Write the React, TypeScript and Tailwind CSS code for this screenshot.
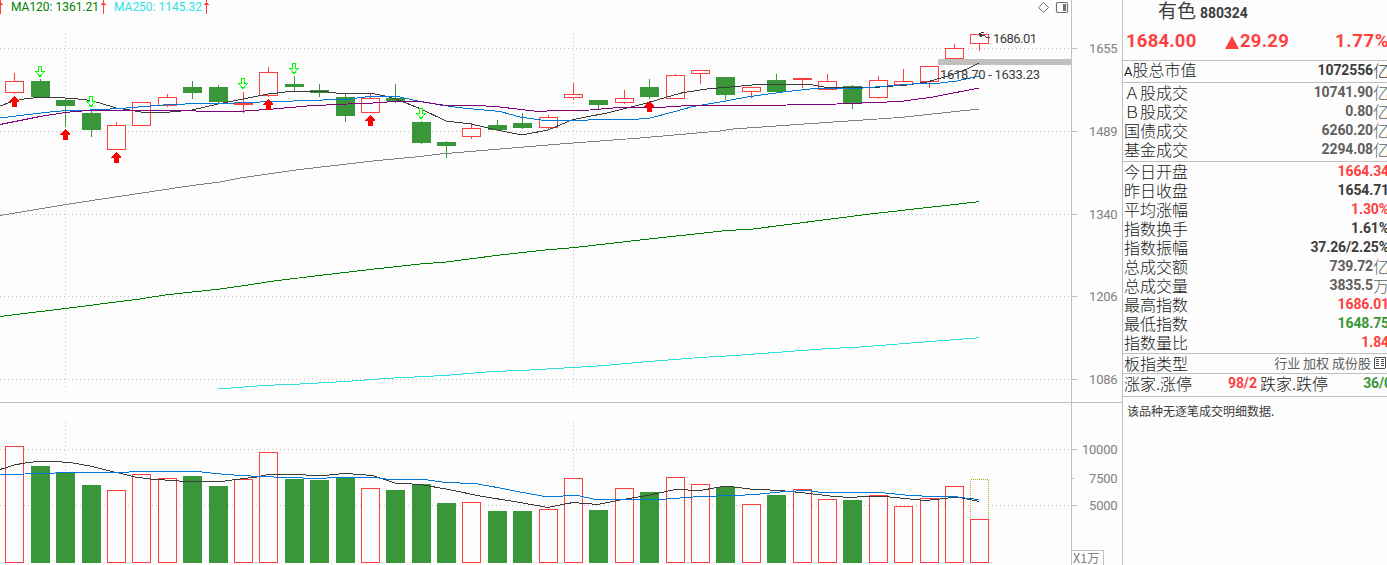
import React from "react";

const RED = "#ff4040";
const GREEN = "#399639";
const BG = "#fdfdfd";
const GRID = "#c0c0c0";

type Bar = {
  x: number;
  up: boolean;
  top: number;
  bottom: number;
  high: number;
  low: number;
  vol: number;
};

const raw: [number, number, number, number, number, number, number][] = [
  [5, 1, 81, 93, 73, 94, 446],
  [31, 0, 81, 97, 79, 97, 466],
  [56, 0, 100, 106, 98, 127, 473],
  [82, 0, 113, 130, 109, 137, 485],
  [107, 1, 125, 150, 122, 150, 490],
  [132, 1, 102, 126, 102, 126, 474],
  [158, 1, 97, 106, 94, 107, 478],
  [183, 0, 87, 93, 81, 99, 476],
  [209, 0, 87, 102, 85, 104, 486],
  [234, 1, 102, 105, 92, 113, 479],
  [259, 1, 72, 96, 67, 97, 452],
  [285, 0, 84, 87, 76, 91, 479],
  [310, 0, 90, 93, 84, 97, 480],
  [336, 0, 97, 116, 94, 122, 477],
  [361, 1, 98, 113, 93, 113, 488],
  [386, 0, 98, 101, 84, 103, 490],
  [412, 0, 122, 143, 121, 144, 484],
  [437, 0, 142, 146, 141, 158, 503],
  [462, 1, 128, 137, 123, 139, 502],
  [488, 0, 125, 130, 120, 130, 511],
  [513, 0, 123, 128, 113, 129, 511],
  [539, 1, 117, 128, 115, 130, 509],
  [564, 1, 94, 98, 83, 100, 478],
  [589, 0, 100, 105, 100, 109, 510],
  [615, 1, 98, 103, 90, 104, 488],
  [640, 0, 87, 97, 79, 99, 492],
  [666, 1, 75, 99, 74, 99, 477],
  [691, 1, 70, 74, 70, 84, 484],
  [716, 0, 77, 95, 77, 100, 487],
  [742, 1, 87, 92, 87, 98, 504],
  [767, 0, 80, 92, 74, 93, 495],
  [793, 1, 78, 80, 78, 88, 489],
  [818, 1, 81, 90, 74, 90, 499],
  [843, 0, 86, 103, 85, 109, 500],
  [869, 1, 80, 98, 76, 99, 495],
  [894, 1, 81, 85, 69, 85, 506],
  [920, 1, 66, 82, 66, 88, 498],
  [945, 1, 48, 59, 44, 59, 486],
  [970, 1, 34, 44, 34, 51, 519],
];

const bars: Bar[] = raw.map(([x, up, top, bottom, high, low, vol]) => ({
  x,
  up: up === 1,
  top,
  bottom,
  high,
  low,
  vol,
}));

const priceLines: [string, string][] = [
  ["#808080", "0,215.5 65,204.7 92,200.5 192,185.5 220,182 240,178 293,170.5 300,169.5 373,161 420,156.5 440,154 500,149 560,144 640,138 720,131 733,129 833,122 900,117.5 979,109"],
  ["#008000", "0,316.5 65,308.5 140,299 165,295 220,289 245,285.5 270,281.5 319,275.5 370,269.5 420,264 446,262 500,255 545,250 573,247.7 640,240 725,230.7 753,229 870,214 979,201.7"],
  ["#2ee0e0", "218,389 265,385.4 300,384 345,381.5 390,378.2 446,375.4 490,371.7 530,370 573,367.5 605,365.5 649,361.5 700,357.5 735,355.5 825,348.8 860,347 905,343.5 979,337.8"],
  ["#3c3c3c", "0,106 14,101 27,98.5 44,97 65,98 85,99.5 100,103 116,108 130,110 141,112 170,112 192,110 218,104 243,99 268,94 294,91 319,91 345,94 370,93 385,96 396,99 421,109 446,121 471,124 497,130 522,135 548,130 573,119.5 607,113 627,108 647,103 667,97 683,92.6 707,89 730,87 747,85.5 763,84 807,84 827,87.5 863,88 880,87 907,85 927,82 953,74.5 967,69 979,63"],
  ["#0078d7", "0,118 45,112.5 68,110.4 90,110 120,108.5 150,106 170,104.5 215,103 235,103 260,102 310,100.5 350,99 370,96.3 397,96.3 413,100 440,105 467,108.5 500,111.5 520,117 543,120.3 583,120.3 597,119.4 637,119.2 650,118 673,112 693,106.5 723,101.5 750,96.5 783,92 810,89 860,88.3 887,86 913,84 940,83 957,81 979,76"],
  ["#800080", "0,124.5 40,116.5 65,112.5 85,110.7 100,110.4 190,110.4 200,111.4 240,111.4 273,109 307,106 340,104.3 373,103 397,101.3 423,102 443,105 480,105.6 500,107 537,111.4 560,110.5 590,110 620,107.4 660,107.4 687,105.6 767,105.4 837,104 900,101.5 933,97 979,88"],
];

const volumeLines: [string, string][] = [
  ["#3c3c3c", "0,469.5 14,465 28,462.5 40,461.4 53,461.4 70,462.5 90,466 110,471 125,474.5 135,477 150,479 165,480 185,481.4 222,481.4 240,479 257,477 268,474.5 300,474.5 310,475.4 325,475.4 345,473.4 360,474.5 372,475.5 383,479 395,483 420,484.5 446,489 480,496 520,502.5 548,507.5 573,502.5 598,504.5 620,500 650,495 675,489.5 700,490.5 720,487 730,486.5 750,489 780,490.5 805,493 830,496 850,497.5 870,496 885,496.5 900,498 925,500.5 940,499 957,497 967,499 979,501.5"],
  ["#0078d7", "0,474.5 50,473.5 60,472.5 128,472.4 130,471.4 197,471.4 215,473.5 240,475.5 262,476.5 285,477.5 320,478.5 335,477.5 375,477.5 390,479.5 425,479.5 445,482.5 475,483.5 500,488 520,492 545,496.5 558,496.5 568,495.5 578,495.5 595,499.5 660,499.5 680,498 700,496.5 735,495.5 755,494.5 785,491.5 808,490.5 825,493 840,492.5 880,492.5 905,495 930,496.5 955,496.5 965,498 979,499.5"],
];

const buyMarks: [number, number][] = [[14, 96], [65, 129], [116, 152], [268, 99], [370, 115], [649, 101]];
const sellMarks: [number, number][] = [[40, 66], [91, 96], [243, 78], [294, 63], [421, 108]];

function Dots({ x1, y1, x2, y2 }: { x1: number; y1: number; x2: number; y2: number }) {
  return <line x1={x1} y1={y1} x2={x2} y2={y2} stroke={GRID} strokeDasharray="1 3" />;
}

function Lines({ data }: { data: [string, string][] }) {
  return (
    <>
      {data.map(([stroke, points]) => (
        <polyline key={stroke} points={points} fill="none" stroke={stroke} />
      ))}
    </>
  );
}

function TopMark({ x }: { x: number }) {
  return <path d={`M${x} 0h1v3h1v1h1v1h-2v9h-1v-9h-2v-1h1v-1h1z`} fill={RED} />;
}

function PriceChart() {
  return (
    <svg width="1071" height="402" viewBox="0 0 1071 402" shapeRendering="crispEdges" className="block shrink-0 font-['Roboto',sans-serif]">
      {[48.5, 131.5, 214.5, 296.5, 379.5].map((y) => (
        <Dots key={y} x1={0} y1={y} x2={1071} y2={y} />
      ))}
      {[65.5, 573.5].map((x) => (
        <Dots key={x} x1={x} y1={34} x2={x} y2={388} />
      ))}
      <TopMark x={0} />
      <TopMark x={103} />
      <TopMark x={206} />
      <text x="11" y="11" fontSize="12" fill="#008000" textLength="88">MA120: 1361.21</text>
      <text x="114" y="11" fontSize="12" fill="#2ee0e0" textLength="88">MA250: 1145.32</text>
      <g shapeRendering="geometricPrecision" fill="none" stroke="#707070">
        <path d="M1043.5 2.5l5 5-5 5-5-5z" />
        <rect x="1056.5" y="2.5" width="11" height="10" rx="1.5" strokeWidth="1.2" />
        <rect x="1063" y="4" width="3" height="7" fill="#707070" stroke="none" />
      </g>
      <rect x="938" y="59" width="133" height="6" fill={GRID} />
      {bars.map((b) => (
        <g key={b.x}>
          <rect x={b.x + 9} y={b.high} width="1" height={b.low - b.high} fill={b.up ? RED : GREEN} />
          {b.up && b.bottom - b.top > 3 ? (
            <rect x={b.x + 0.5} y={b.top + 0.5} width="18" height={b.bottom - b.top - 1} fill={BG} stroke={RED} />
          ) : (
            <rect x={b.x} y={b.top} width="19" height={b.bottom - b.top} fill={b.up ? RED : GREEN} />
          )}
        </g>
      ))}
      <Lines data={priceLines} />
      {buyMarks.map(([x, y]) => (
        <path key={x} d={`M${x} ${y}l5 5v1h-2v5h-5v-5h-3v-1z`} fill="#ff0000" />
      ))}
      {sellMarks.map(([x, y]) => (
        <path key={x} d={`M${x - 1.5} ${y + 0.5}h3v5h3l-4.5 5-4.5-5h3z`} fill={BG} stroke="#00ff00" />
      ))}
      <path d="M990 37.5h-3l-3-2-5-1M979.5 34l2-1.5h2M979.5 35l2 2" fill="none" stroke="#3c3c3c" />
      <text x="993" y="43" fontSize="13" fill="#3c3c3c" textLength="44">1686.01</text>
      <text x="940" y="79" fontSize="13" fill="#3c3c3c" textLength="100">1618.70 - 1633.23</text>
    </svg>
  );
}

function VolumeChart() {
  return (
    <svg width="1071" height="162" viewBox="0 403 1071 162" shapeRendering="crispEdges" className="block shrink-0">
      <Dots x1={0} y1={449.5} x2={1071} y2={449.5} />
      <Dots x1={0} y1={505.5} x2={1071} y2={505.5} />
      {[65.5, 573.5].map((x) => (
        <Dots key={x} x1={x} y1={422} x2={x} y2={563} />
      ))}
      <rect x="970.5" y="479.5" width="18" height="50" fill={BG} stroke="#b4a814" strokeDasharray="1 1" />
      {bars.map((b) =>
        b.up ? (
          <rect key={b.x} x={b.x + 0.5} y={b.vol + 0.5} width="18" height={562 - b.vol} fill={BG} stroke={RED} />
        ) : (
          <rect key={b.x} x={b.x} y={b.vol} width="19" height={563 - b.vol} fill={GREEN} />
        ),
      )}
      <Lines data={volumeLines} />
    </svg>
  );
}

function Axis({ top, height, ticks }: { top: number; height: number; ticks: [string, number, number][] }) {
  return (
    <svg width="50" height={height} viewBox={`0 ${top} 50 ${height}`} className="block font-['Roboto',sans-serif]">
      {ticks.map(([label, y, len]) => (
        <g key={label}>
          <rect x="0" y={y} width={len} height="1" fill={GRID} />
          <text x="45.5" y={y + 5} fontSize="13" fill="#808080" textAnchor="end" textLength={label.length * 7.1}>
            {label}
          </text>
        </g>
      ))}
    </svg>
  );
}

type RowData = { label: React.ReactNode; value: string; unit?: string; tone: string };

const market: RowData[] = [
  { label: "Ａ股成交", value: "10741.90", unit: "亿", tone: "text-[#606060]" },
  { label: "Ｂ股成交", value: "0.80", unit: "亿", tone: "text-[#606060]" },
  { label: "国债成交", value: "6260.20", unit: "亿", tone: "text-[#606060]" },
  { label: "基金成交", value: "2294.08", unit: "亿", tone: "text-[#606060]" },
];

const detail: RowData[] = [
  { label: "今日开盘", value: "1664.34", tone: "text-[#ff4040]" },
  { label: "昨日收盘", value: "1654.71", tone: "text-[#3c3c3c]" },
  { label: "平均涨幅", value: "1.30%", tone: "text-[#ff4040]" },
  { label: "指数换手", value: "1.61%", tone: "text-[#3c3c3c]" },
  { label: "指数振幅", value: "37.26/2.25%", tone: "text-[#3c3c3c]" },
  { label: "总成交额", value: "739.72", unit: "亿", tone: "text-[#606060]" },
  { label: "总成交量", value: "3835.5", unit: "万", tone: "text-[#606060]" },
  { label: "最高指数", value: "1686.01", tone: "text-[#ff4040]" },
  { label: "最低指数", value: "1648.75", tone: "text-[#399639]" },
  { label: "指数量比", value: "1.84", tone: "text-[#ff4040]" },
];

function Row({ row }: { row: RowData }) {
  return (
    <div className="-mr-[2px] flex h-[19px] items-center justify-between pl-px leading-[19px]">
      <span className="text-[16px] font-light text-[#181818]">{row.label}</span>
      <span className={"flex items-center " + row.tone}>
        <span className="font-['Roboto',sans-serif] text-[14px] font-bold tracking-[-0.12px]">{row.value}</span>
        {row.unit && <span className="text-[16px] font-light">{row.unit}</span>}
      </span>
    </div>
  );
}

function QuotePanel() {
  return (
    <aside className="flex h-full w-[265px] shrink-0 flex-col overflow-hidden border-l border-[#c0c0c0] whitespace-nowrap text-[#3c3c3c]">
      <div className="flex h-[60px] shrink-0 flex-col">
        <div className="flex h-[24px] items-baseline gap-[4px] pl-[35px] leading-[20px]">
          <span className="text-[19px]">有色</span>
          <span className="font-['Roboto',sans-serif] text-[14px] font-bold tracking-[-0.1px]">880324</span>
        </div>
        <div className="-mr-[2px] flex h-[36px] items-center pl-[3px] font-['Roboto',sans-serif] text-[18.5px] font-bold text-[#ff4040]">
          <span className="w-[99px] tracking-[0.2px]">1684.00</span>
          <span className="flex items-center gap-[1px] tracking-[0.25px]">
            <svg width="14" height="13" viewBox="0 0 14 13">
              <path d="M7 0l7 13H0z" fill={RED} />
            </svg>
            29.29
          </span>
          <span className="ml-auto tracking-[0.6px]">1.77%</span>
        </div>
      </div>
      <div className="h-[22px] shrink-0 border-t border-[#c0c0c0]">
        <Row row={{ label: <><b className="font-['Roboto',sans-serif] text-[13px]">A</b>股总市值</>, value: "1072556", unit: "亿", tone: "text-[#3c3c3c]" }} />
      </div>
      <div className="h-[79px] shrink-0 border-t border-[#c0c0c0]">
        {market.map((r) => <Row key={r.value} row={r} />)}
      </div>
      <div className="h-[192px] shrink-0 border-t border-[#c0c0c0]">
        {detail.map((r) => <Row key={r.value} row={r} />)}
      </div>
      <div className="flex h-[20px] shrink-0 items-center border-t border-[#c0c0c0] pb-[2px] pl-px">
        <span className="text-[16px] leading-[18px] font-light text-[#181818]">板指类型</span>
        <span className="ml-auto text-[13px] leading-[18px] text-[#606060]">行业 加权 成份股</span>
        <svg width="12" height="12" viewBox="0 0 12 12" shapeRendering="crispEdges" className="mr-px ml-[3px]" fill="none" stroke="#505050">
          <rect x="0.5" y="0.5" width="11" height="11" rx="1.5" />
          <path d="M2 2.5h3M2 4.5h3M2 6.5h3M2 8.5h3M7 2.5h3M7 4.5h3M7 6.5h3M7 8.5h3" />
        </svg>
      </div>
      <div className="-mr-[5px] flex h-[23px] shrink-0 items-center border-t border-[#c0c0c0] pb-[3px] pl-px leading-[19px]">
        <span className="w-[104px] text-[16px] font-light text-[#181818]">涨家.涨停</span>
        <span className="w-[32px] font-['Roboto',sans-serif] text-[14px] font-bold tracking-[-0.12px] text-[#ff4040]">98/2</span>
        <span className="text-[16px] font-light text-[#181818]">跌家.跌停</span>
        <span className="ml-auto font-['Roboto',sans-serif] text-[14px] font-bold tracking-[-0.12px] text-[#399639]">36/0</span>
      </div>
      <div className="flex-1 border-t border-[#c0c0c0] pt-[4px] pl-[4px] text-[12px] leading-[19px]">
        该品种无逐笔成交明细数据.
      </div>
    </aside>
  );
}

export default function App() {
  return (
    <div className="flex h-[565px] w-[1387px] overflow-hidden bg-[#fdfdfd] font-['Noto_Sans_CJK_SC',sans-serif]">
      <main className="flex w-[1122px] shrink-0 flex-col">
        <section className="flex h-[402px] shrink-0">
          <PriceChart />
          <div className="w-[51px] border-l border-[#c0c0c0]">
            <Axis top={0} height={402} ticks={[["1655", 48, 5], ["1489", 131, 5], ["1340", 214, 5], ["1206", 296, 5], ["1086", 379, 5]]} />
          </div>
        </section>
        <section className="flex h-[163px] shrink-0 border-t border-[#c0c0c0]">
          <VolumeChart />
          <div className="flex w-[51px] flex-col border-l border-[#c0c0c0]">
            <Axis top={403} height={147} ticks={[["10000", 449, 5], ["7500", 478, 2], ["5000", 505, 5]]} />
            <div className="h-[15px] w-[32px] overflow-hidden border-t border-r border-[#c0c0c0] pl-px text-[12.5px] leading-[14px] text-[#808080]">
              X1万
            </div>
          </div>
        </section>
      </main>
      <QuotePanel />
    </div>
  );
}
